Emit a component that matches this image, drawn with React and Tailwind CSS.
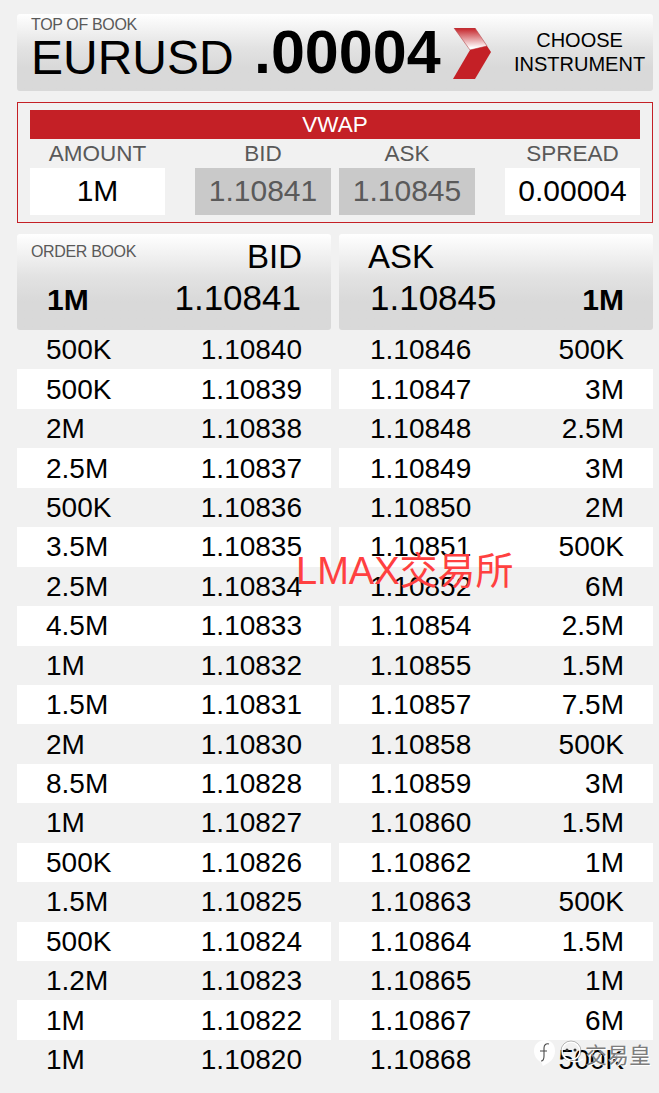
const bidRows = [
  ['500K', '1.10840'], ['500K', '1.10839'], ['2M', '1.10838'], ['2.5M', '1.10837'],
  ['500K', '1.10836'], ['3.5M', '1.10835'], ['2.5M', '1.10834'], ['4.5M', '1.10833'],
  ['1M', '1.10832'], ['1.5M', '1.10831'], ['2M', '1.10830'], ['8.5M', '1.10828'],
  ['1M', '1.10827'], ['500K', '1.10826'], ['1.5M', '1.10825'], ['500K', '1.10824'],
  ['1.2M', '1.10823'], ['1M', '1.10822'], ['1M', '1.10820'],
];

const askRows = [
  ['1.10846', '500K'], ['1.10847', '3M'], ['1.10848', '2.5M'], ['1.10849', '3M'],
  ['1.10850', '2M'], ['1.10851', '500K'], ['1.10852', '6M'], ['1.10854', '2.5M'],
  ['1.10855', '1.5M'], ['1.10857', '7.5M'], ['1.10858', '500K'], ['1.10859', '3M'],
  ['1.10860', '1.5M'], ['1.10862', '1M'], ['1.10863', '500K'], ['1.10864', '1.5M'],
  ['1.10865', '1M'], ['1.10867', '6M'], ['1.10868', '500K'],
];

const gradient = 'bg-gradient-to-b from-white via-[#e2e2e2] via-45% to-[#d9d9d9] to-70%';

function Chevron() {
  return (
    <svg width="40" height="53" viewBox="0 0 40 53" className="shrink-0">
      <defs>
        <linearGradient id="chevTop" x1="0" y1="0" x2="0" y2="1">
          <stop offset="0" stopColor="#c42026" />
          <stop offset="0.9" stopColor="#ffffff" />
        </linearGradient>
      </defs>
      <polygon points="1,0 22,0 34,18 17,22" fill="url(#chevTop)" stroke="#b5474b" strokeWidth="0.6" />
      <polygon points="17,22 34,18 38,24 22,51 0,51" fill="#c42026" />
    </svg>
  );
}

function VwapCell({ label, value, grey, wide }) {
  return (
    <div className={`flex shrink-0 flex-col items-center ${wide}`}>
      <div className="h-[29px] text-[22.5px] leading-[29px] text-[#595959] [font-kerning:none]">{label}</div>
      <div className={`flex h-[47px] w-full items-center justify-center pb-[3px] text-[30px] ${grey ? 'bg-[#c9c9c9] text-[#5a5a5a]' : 'bg-white text-black'}`}>
        {value}
      </div>
    </div>
  );
}

export default function App() {
  return (
    <div className="relative min-h-[1093px] overflow-hidden bg-[#f1f1f1] pl-[17px] pr-[6px] pt-[14px] font-['Liberation_Sans',Arial,sans-serif] text-black">
      {/* top of book */}
      <div className={`flex h-[77px] rounded-[3px] ${gradient}`}>
        <div className="w-[237px] pl-[14px]">
          <div className="h-[17px] pt-[1px] text-[16px] leading-[20px] tracking-[-0.35px] text-[#595959]">TOP OF BOOK</div>
          <div className="mt-[1px] text-[48px] leading-[52px] [font-kerning:none]">EURUSD</div>
        </div>
        <div className="w-[199px] text-[61px] font-bold leading-[76px]">.00004</div>
        <div className="pt-[14px]"><Chevron /></div>
        <div className="ml-[21px] pt-[14px] text-center text-[20px] leading-[24px] [font-kerning:none]">
          CHOOSE<br />INSTRUMENT
        </div>
      </div>

      {/* vwap */}
      <div className="mt-[11px] h-[121px] border border-[#c42026] px-[12px] pt-[7px]">
        <div className="flex h-[29px] items-center justify-center bg-[#c42026] text-[22.5px] text-white">VWAP</div>
        <div className="flex">
          <VwapCell label="AMOUNT" value="1M" wide="w-[135px] mr-[30px]" />
          <VwapCell label="BID" value="1.10841" grey wide="w-[136px] mr-[8px]" />
          <VwapCell label="ASK" value="1.10845" grey wide="w-[136px] mr-[30px]" />
          <VwapCell label="SPREAD" value="0.00004" wide="w-[135px]" />
        </div>
      </div>

      {/* order book */}
      <div className="mt-[11px] flex gap-[8px]">
        <div className="w-[314px]">
          <div className={`h-[96px] rounded-[3px] px-[14px] ${gradient}`}>
            <div className="flex justify-between pr-[15px]">
              <div className="pt-[8px] text-[16px] leading-[20px] tracking-[-0.35px] text-[#595959]">ORDER BOOK</div>
              <div className="pt-[3px] text-[33px] leading-[40px]">BID</div>
            </div>
            <div className="flex items-center justify-between pl-[16px] pr-[16px]">
              <div className="pt-[5px] text-[30px] font-bold leading-[36px]">1M</div>
              <div className="text-[35px] leading-[40px]">1.10841</div>
            </div>
          </div>
          {bidRows.map(([size, price], i) => (
            <div key={price} className={`flex h-[39.44px] items-center justify-between px-[29px] pt-[1px] text-[28px] [font-kerning:none] ${i % 2 === 1 ? 'bg-white' : ''}`}>
              <span>{size}</span>
              <span>{price}</span>
            </div>
          ))}
        </div>
        <div className="w-[314px]">
          <div className={`h-[96px] rounded-[3px] px-[29px] ${gradient}`}>
            <div className="pt-[3px] text-[33px] leading-[40px]">ASK</div>
            <div className="flex items-center justify-between pl-[2px]">
              <div className="text-[35px] leading-[40px]">1.10845</div>
              <div className="pt-[5px] text-[30px] font-bold leading-[36px]">1M</div>
            </div>
          </div>
          {askRows.map(([price, size], i) => (
            <div key={price} className={`flex h-[39.44px] items-center justify-between pl-[31px] pr-[29px] pt-[1px] text-[28px] [font-kerning:none] ${i % 2 === 1 ? 'bg-white' : ''}`}>
              <span>{price}</span>
              <span>{size}</span>
            </div>
          ))}
        </div>
      </div>

      {/* watermarks over the table */}
      <div className="absolute left-[296px] top-[548px] whitespace-nowrap font-['Liberation_Sans','Noto_Sans_CJK_SC',sans-serif] text-[38px] leading-[46px] text-[#ff4040]">
        LMAX交易所
      </div>
      <div className="absolute left-[534px] top-[1040px] flex items-center gap-[1px]">
        <svg width="50" height="27" viewBox="0 0 50 27" fill="none">
          <path d="M0 11C0 4 5 0 11 0s10 4 10 11c0 8-6 12-12 15-1-1-1-3-2-4C3 20 0 16 0 11z" fill="#ffffff" fillOpacity="0.92" />
          <path d="M15 4c-3-1-5 1-5 4v8c0 3-1 5-3 5M6 11h7" stroke="#4a4a4a" strokeWidth="1.1" />
          <circle cx="37" cy="11" r="9" stroke="#ffffff" strokeWidth="1.6" />
          <circle cx="37" cy="11" r="10" stroke="#777" strokeWidth="0.5" />
          <circle cx="33" cy="10" r="1.5" fill="#333" />
          <circle cx="41" cy="10" r="1.5" fill="#333" />
          <path d="M30 16c4 7 14 7 19 3" stroke="#ffffff" strokeWidth="1.4" />
        </svg>
        <span className="font-['Noto_Sans_CJK_SC',sans-serif] text-[22px] leading-[27px] text-[#7d7d7d] [text-shadow:1px_1px_0_#fff]">交易皇</span>
      </div>
    </div>
  );
}
